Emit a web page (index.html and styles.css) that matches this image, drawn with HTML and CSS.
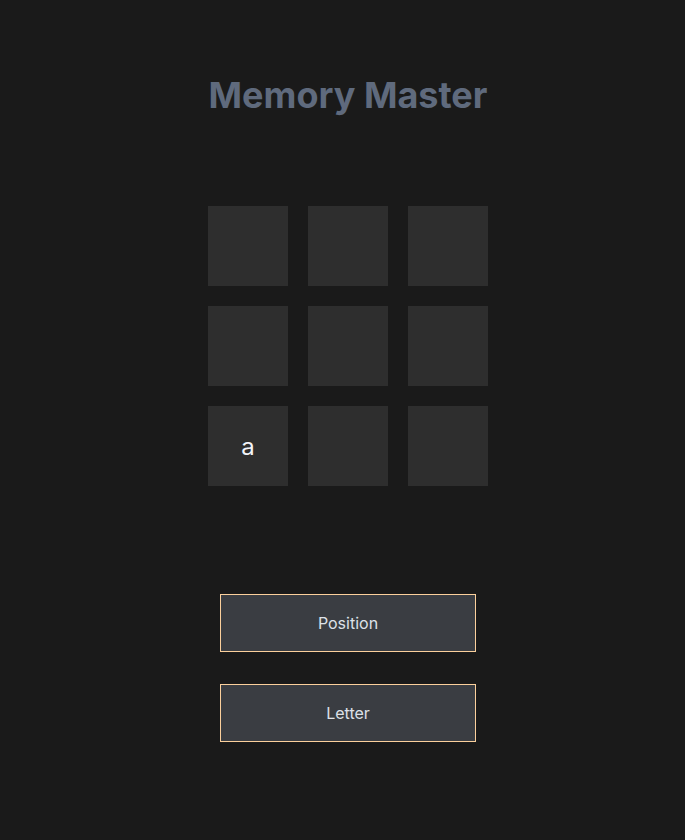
FILE: index.html
```html
<!DOCTYPE html>
<html>
<head>
<meta charset="utf-8">
<link rel="stylesheet" href="styles.css">
</head>
<body>
<main class="app">
  <h1 class="title">Memory Master</h1>
  <div class="grid">
    <div class="cell"></div>
    <div class="cell"></div>
    <div class="cell"></div>
    <div class="cell"></div>
    <div class="cell"></div>
    <div class="cell"></div>
    <div class="cell">a</div>
    <div class="cell"></div>
    <div class="cell"></div>
  </div>
  <div class="controls">
    <button class="btn">Position</button>
    <button class="btn">Letter</button>
  </div>
</main>
</body>
</html>
```
FILE: styles.css
```css
html, body {
  margin: 0;
  padding: 0;
  background: #1a1a1a;
  height: 100%;
}
body {
  font-family: Inter, "Noto Sans", sans-serif;
}
.app {
  display: flex;
  flex-direction: column;
  align-items: center;
  padding-left: 11px;
  padding-top: 73px;
}
.title {
  margin: 0;
  font-size: 36px;
  font-weight: 700;
  line-height: 44px;
  color: #5f6a7d;
}
.grid {
  display: grid;
  grid-template-columns: repeat(3, 80px);
  grid-auto-rows: 80px;
  gap: 20px;
  margin-top: 89px;
}
.cell {
  background: #2e2e2e;
  display: flex;
  align-items: center;
  justify-content: center;
  color: #f2f4f8;
  font-size: 24px;
}
.controls {
  display: flex;
  flex-direction: column;
  gap: 32px;
  margin-top: 108px;
}
.btn {
  width: 256px;
  height: 58px;
  background: #3a3d42;
  border: 1px solid #fbd09c;
  color: #dde1e8;
  font-family: Inter, "Noto Sans", sans-serif;
  font-size: 16px;
  padding: 0;
}
```
